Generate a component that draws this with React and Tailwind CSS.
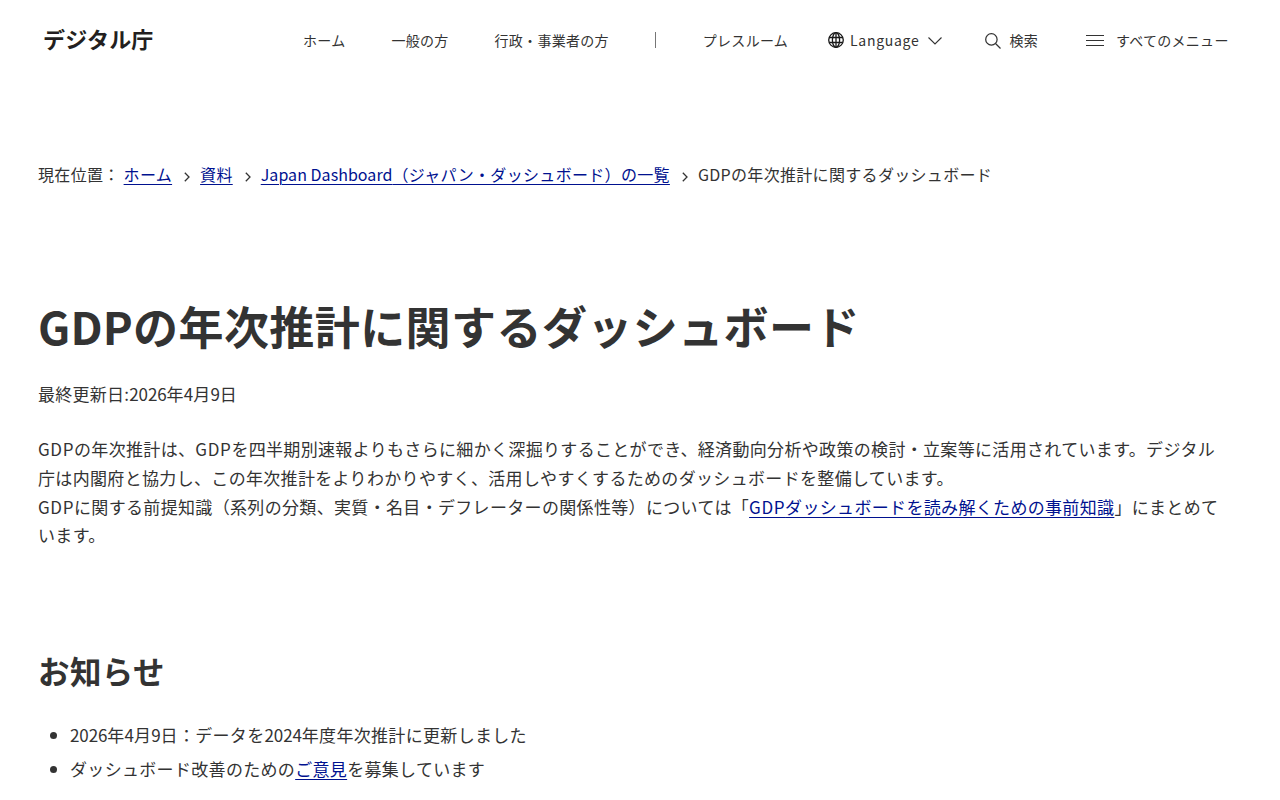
import { Fragment } from 'react'

const NAV_ITEMS = ['ホーム', '一般の方', '行政・事業者の方']

function GlobeIcon() {
  return (
    <svg width="16" height="16" viewBox="0 0 16 16" fill="none" stroke="#1a1a1a" strokeWidth="1.3" className="mr-1.5">
      <circle cx="8" cy="8" r="7.3" />
      <ellipse cx="8" cy="8" rx="3.6" ry="7.3" />
      <path d="M8 .7v14.6M1.2 5.5h13.6M1.2 10.5h13.6" />
    </svg>
  )
}

function SearchIcon() {
  return (
    <svg width="16" height="16" viewBox="0 0 16 16" fill="none" stroke="currentColor" strokeWidth="1.25" className="mt-0.5 mr-2">
      <circle cx="6.4" cy="6.4" r="5.7" />
      <path d="m10.5 10.5 5 5" />
    </svg>
  )
}

function TextLink({ children }) {
  return (
    <a href="#" className="text-[#00118f] underline decoration-1 underline-offset-[3px]">{children}</a>
  )
}

// Digits are set a little tighter than the kana and kanji around them
function Num({ children }) {
  return <span className="tracking-[-0.12px]">{children}</span>
}

function Gdp() {
  return <span className="tracking-[0.62px]">GDP</span>
}

const BREADCRUMBS = [
  { id: 'home', label: 'ホーム' },
  { id: 'resources', label: '資料' },
  {
    id: 'dashboard',
    label: <><span className="tracking-[0.04px]">Japan Dashboard</span>（ジャパン・ダッシュボード）の一覧</>,
  },
]

function Header() {
  return (
    <header className="flex h-[79px] items-center pl-[43px] text-sm tracking-[0.28px]">
      <a href="#" className="mb-0.5 w-[260px] text-[22px] font-bold tracking-[0.2px] text-[#231f20]">デジタル庁</a>
      <nav className="flex items-center">
        {NAV_ITEMS.map(item => (
          <a key={item} href="#" className="mr-[46px]">{item}</a>
        ))}
        <span className="mt-px mr-[47px] h-4 w-px bg-[#767676]" />
        <a href="#">プレスルーム</a>
      </nav>
      <button className="ml-10 flex items-center">
        <GlobeIcon />
        <span className="tracking-[0.7px]">Language</span>
        <svg width="14" height="8" viewBox="0 0 14 8" fill="none" stroke="currentColor" strokeWidth="1.1" className="mt-0.5 ml-[9px]">
          <path d="m.5.5 6.5 6.5 6.5-6.5" />
        </svg>
      </button>
      <button className="ml-[43px] flex items-center">
        <SearchIcon />
        検索
      </button>
      <button className="ml-12 flex items-center">
        <svg width="18" height="11" viewBox="0 0 18 11" stroke="currentColor" className="mt-0.5 mr-3">
          <path d="M0 .5h18M0 5.5h18M0 10.5h18" />
        </svg>
        すべてのメニュー
      </button>
    </header>
  )
}

export default function App() {
  return (
    <div className="h-[800px] overflow-hidden whitespace-nowrap bg-white font-['Noto_Sans_CJK_JP',sans-serif] text-[#333]" lang="ja">
      <Header />
      <main className="px-[38px]">
        <nav className="mt-[82px] flex items-center text-base leading-[26px] tracking-[0.32px]">
          <span className="mr-1">現在位置：</span>
          {BREADCRUMBS.map(crumb => (
            <Fragment key={crumb.id}>
              <TextLink>{crumb.label}</TextLink>
              <svg width="6" height="10" viewBox="0 0 6 10" fill="none" stroke="currentColor" strokeWidth="1.3" className="mt-1.5 ml-3 mr-2.5">
                <path d="m.8.8 4.2 4.2L.8 9.2" />
              </svg>
            </Fragment>
          ))}
          <span>GDPの年次推計に関するダッシュボード</span>
        </nav>

        <h1 className="mt-[104px] text-[45px] leading-[70px] font-bold tracking-[0.43px]">
          <span className="tracking-[0.2px]">GDP</span>の年次推計に関するダッシュボード
        </h1>
        <p className="mt-[18px] text-[17px] leading-[29px] tracking-[0.26px]">
          最終更新日:<Num>2026</Num>年<Num>4</Num>月<Num>9</Num>日
        </p>

        <p className="mt-[27px] text-[17px] leading-[28.8px] tracking-[0.33px]">
          <Gdp />の年次推計は、<Gdp />を四半期別速報よりもさらに細かく深掘りすることができ、経済動向分析や政策の検討・立案等に活用されています。デジタル<br />
          庁は内閣府と協力し、この年次推計をよりわかりやすく、活用しやすくするためのダッシュボードを整備しています。<br />
          <Gdp />に関する前提知識（系列の分類、実質・名目・デフレーターの関係性等）については「<TextLink><Gdp />ダッシュボードを読み解くための事前知識</TextLink>」にまとめて<br />
          います。
        </p>

        <h2 className="mt-[96px] text-[31.5px] leading-[48px] font-bold tracking-[0.4px]">お知らせ</h2>
        <ul className="mt-[26px] ml-3 space-y-[5px] text-[17px] leading-[29px] tracking-[0.32px]">
          <li className="flex items-center">
            <span className="mt-0.5 mr-[13px] size-[7px] rounded-full bg-[#333]" />
            <span><Num>2026</Num>年<Num>4</Num>月<Num>9</Num>日：データを<Num>2024</Num>年度年次推計に更新しました</span>
          </li>
          <li className="flex items-center">
            <span className="mt-0.5 mr-[13px] size-[7px] rounded-full bg-[#333]" />
            <span>ダッシュボード改善のための<TextLink>ご意見</TextLink>を募集しています</span>
          </li>
        </ul>
      </main>
    </div>
  )
}
